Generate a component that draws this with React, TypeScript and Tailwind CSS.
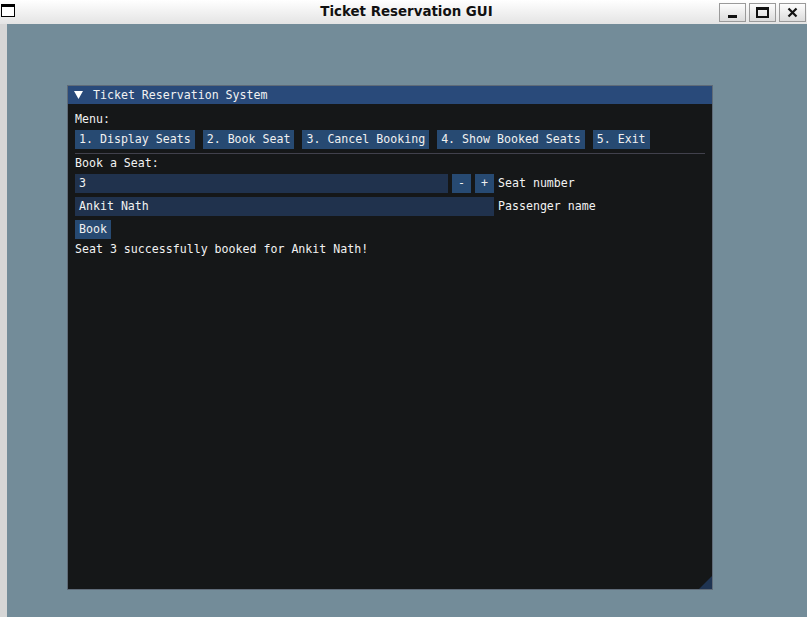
import React from 'react';

const mono = { fontFamily: '"DejaVu Sans Mono", "Liberation Mono", monospace' };

const ImButton = ({ label, className = '' }: { label: string; className?: string }) => (
    <div className={`h-[19px] px-[4px] flex items-center bg-[#274a72] text-[#f0f0f0] whitespace-pre ${className}`}>{label}</div>
);

const TitleButton = ({ children }: { children: React.ReactNode }) => (
    <div className="w-[27px] h-[19px] border border-[#9a9a9a] bg-gradient-to-b from-[#fdfdfd] to-[#dcdcdc] flex items-center justify-center">
        {children}
    </div>
);

export default function App() {
    const menu = ['1. Display Seats', '2. Book Seat', '3. Cancel Booking', '4. Show Booked Seats', '5. Exit'];
    return (
        <div className="w-[807px] h-[617px] flex flex-col overflow-hidden bg-[#d6d6d6]">
            {/* OS title bar */}
            <div className="h-[24px] shrink-0 relative flex items-center justify-center bg-gradient-to-b from-[#ffffff] to-[#e4e4e4]">
                <svg className="absolute left-[1px] top-[4px]" width="14" height="13" viewBox="0 0 14 13">
                    <rect x="0.5" y="0.5" width="13" height="12" fill="#fff" stroke="#000" />
                    <rect x="0" y="0" width="14" height="3" fill="#000" />
                </svg>
                <span className="text-[13.4px] font-bold text-[#111] pl-[6px]" style={{ fontFamily: '"DejaVu Sans", sans-serif' }}>
                    Ticket Reservation GUI
                </span>
                <div className="absolute right-[1px] top-[3px] flex gap-[3px]">
                    <TitleButton>
                        <div className="w-[9px] h-[3px] bg-[#111] mt-[8px]" />
                    </TitleButton>
                    <TitleButton>
                        <div className="w-[13px] h-[11px] border-[2px] border-t-[3px] border-[#111]" />
                    </TitleButton>
                    <TitleButton>
                        <svg width="11" height="11" viewBox="0 0 11 11">
                            <path d="M1.5 1.5 L9.5 9.5 M9.5 1.5 L1.5 9.5" stroke="#111" strokeWidth="2.2" />
                        </svg>
                    </TitleButton>
                </div>
            </div>

            {/* GL canvas */}
            <div className="flex-1 ml-[7px] bg-[#738c99] pl-[60px] pt-[61px]">
                <div
                    className="w-[646px] h-[505px] border border-[#5f6b78] bg-[#151718] flex flex-col relative text-[11.6px] leading-[13px] text-[#f2f2f2]"
                    style={mono}
                >
                    {/* ImGui title */}
                    <div className="h-[18px] shrink-0 bg-[#294a7a] flex items-center pl-[6px] gap-[10px]">
                        <svg width="9" height="8" viewBox="0 0 9 8">
                            <path d="M0 0 H9 L4.5 8 Z" fill="#fff" />
                        </svg>
                        <span className="pt-[1px]">Ticket Reservation System</span>
                    </div>

                    <div className="flex flex-col gap-[4px] px-[7px] pt-[9px]">
                        <div className="h-[13px]">Menu:</div>
                        <div className="flex gap-[8px]">
                            {menu.map((m) => (
                                <ImButton key={m} label={m} />
                            ))}
                        </div>
                        <div className="h-[1px] bg-[#41414c] w-[630px]" />
                        <div className="h-[13px] -mt-[1px]">Book a Seat:</div>
                        <div className="flex items-center gap-[4px]">
                            <div className="w-[373px] h-[19px] bg-[#20324d] flex items-center px-[4px]">3</div>
                            <ImButton label="-" className="w-[19px] justify-center px-0" />
                            <ImButton label="+" className="w-[19px] justify-center px-0" />
                            <span>Seat number</span>
                        </div>
                        <div className="flex items-center gap-[4px]">
                            <div className="w-[419px] h-[19px] bg-[#20324d] flex items-center px-[4px]">Ankit Nath</div>
                            <span>Passenger name</span>
                        </div>
                        <div className="flex">
                            <ImButton label="Book" />
                        </div>
                        <div className="h-[13px]">Seat 3 successfully booked for Ankit Nath!</div>
                    </div>

                    {/* resize grip */}
                    <svg className="absolute right-0 bottom-0" width="13" height="13" viewBox="0 0 13 13">
                        <path d="M13 0 V13 H0 Z" fill="#1f3452" />
                    </svg>
                </div>
            </div>
        </div>
    );
}
